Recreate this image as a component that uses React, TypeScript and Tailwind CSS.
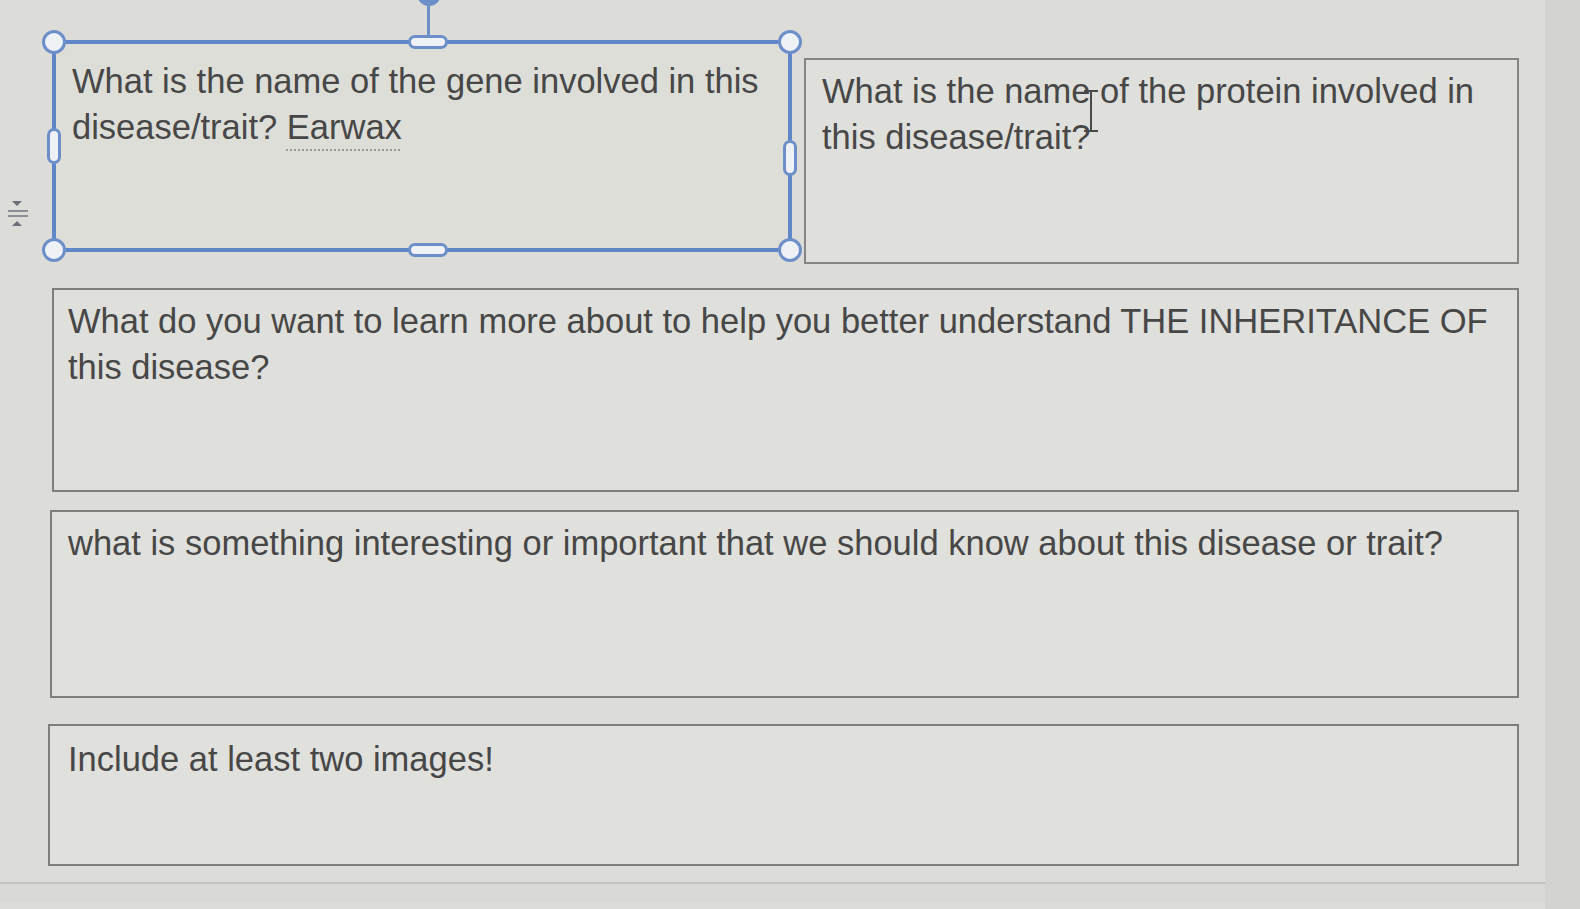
import React from "react";

const font = { fontFamily: '"Liberation Sans", Arial, sans-serif' };

function Handle({ className }: { className: string }) {
  return <div className={`absolute bg-[#eef1f6] border-[3px] border-[#6d8fc9] ${className}`} />;
}

export default function App() {
  return (
    <div className="w-[1580px] h-[909px] overflow-hidden bg-[#d3d3cf] flex" style={font}>
      <div className="w-[1545px] h-full flex flex-col bg-[#dcdcd8]">
        <div className="flex-1 flex">
          {/* left gutter */}
          <div className="w-[48px] flex flex-col items-start pt-[196px] pl-[4px]">
            <svg width="26" height="36" viewBox="0 0 26 36">
              <path d="M8 5 L18 5 L13 10 Z" fill="#6a6f78" />
              <rect x="4" y="14" width="20" height="2" fill="#8a8f98" />
              <rect x="4" y="19" width="20" height="2" fill="#8a8f98" />
              <path d="M8 30 L18 30 L13 25 Z" fill="#6a6f78" />
            </svg>
          </div>
          {/* slide content */}
          <div className="flex-1 flex flex-col pt-[40px] pr-[26px] text-[#474747] text-[34.5px] leading-[46px]">
            <div className="flex items-start gap-[12px]">
              {/* selected box */}
              <div className="relative w-[740px] h-[212px] ml-[4px] border-[4px] border-[#5f86c6] bg-[#deded9] pl-[16px] pt-[14px] pr-[6px]">
                <div className="absolute left-[371px] -top-[44px] w-[3px] h-[42px] bg-[#6d8fc9]" />
                <div className="absolute left-[361px] -top-[62px] w-[24px] h-[24px] rounded-full bg-[#6d8fc9]" />
                <Handle className="-left-[14px] -top-[14px] w-[24px] h-[24px] rounded-full" />
                <Handle className="-right-[14px] -top-[14px] w-[24px] h-[24px] rounded-full" />
                <Handle className="-left-[14px] -bottom-[14px] w-[24px] h-[24px] rounded-full" />
                <Handle className="-right-[14px] -bottom-[14px] w-[24px] h-[24px] rounded-full" />
                <Handle className="left-[352px] -top-[9px] w-[40px] h-[14px] rounded-full" />
                <Handle className="left-[352px] -bottom-[9px] w-[40px] h-[14px] rounded-full" />
                <Handle className="-left-[9px] top-[84px] w-[14px] h-[36px] rounded-full" />
                <Handle className="-right-[9px] top-[96px] w-[14px] h-[36px] rounded-full" />
                <p>
                  What is the name of the gene involved in this disease/trait?{" "}
                  <span className="underline decoration-dotted decoration-[#9a9a9a] decoration-2 underline-offset-[10px]">Earwax</span>
                </p>
              </div>
              {/* protein box */}
              <div className="relative flex-1 h-[206px] mt-[18px] border-[2px] border-[#858585] bg-[#dfdfdb] pl-[16px] pt-[8px] pr-[30px]">
                <p>What is the name of the protein involved in this disease/trait?</p>
                {/* text cursor (I-beam) */}
                <div className="absolute left-[284px] top-[30px] w-[2px] h-[42px] bg-[#4a4a4a]" />
                <div className="absolute left-[278px] top-[30px] w-[14px] h-[2px] bg-[#4a4a4a]" />
                <div className="absolute left-[278px] top-[70px] w-[14px] h-[2px] bg-[#4a4a4a]" />
              </div>
            </div>

            <div className="h-[204px] mt-[24px] ml-[4px] border-[2px] border-[#7e7e7e] bg-[#dfdfdb] pl-[14px] pt-[8px] pr-[8px]">
              <p>What do you want to learn more about to help you better understand THE INHERITANCE OF this disease?</p>
            </div>

            <div className="h-[188px] mt-[18px] ml-[2px] border-[2px] border-[#7e7e7e] bg-[#e0e0dc] pl-[16px] pt-[8px] pr-[20px]">
              <p>what is something interesting or important that we should know about this disease or trait?</p>
            </div>

            <div className="h-[142px] mt-[26px] border-[2px] border-[#7e7e7e] bg-[#e0e0dc] pl-[18px] pt-[10px] pr-[20px]">
              <p>Include at least two images!</p>
            </div>
          </div>
        </div>
        <div className="h-[20px] border-t-[2px] border-[#c4c4c0] bg-[#d9d9d5] mb-[7px]" />
      </div>
    </div>
  );
}
